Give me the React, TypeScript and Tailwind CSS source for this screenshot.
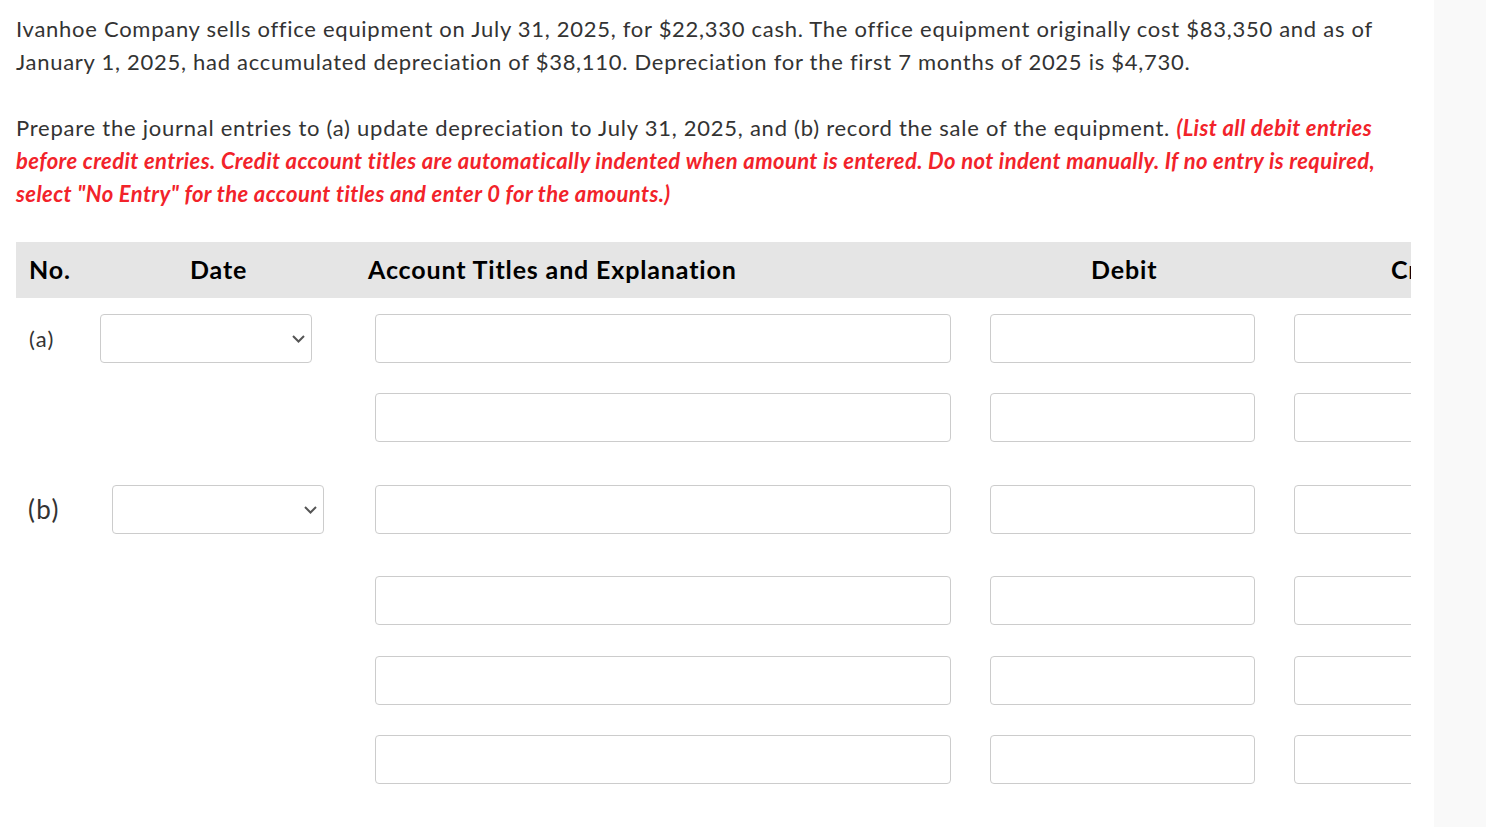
const box = "h-[49px] rounded-[4px] border border-[#cccccc] bg-white shrink-0";

function DateSelect() {
  return (
    <div className={`${box} w-[212px] flex items-center justify-end pr-[6px]`}>
      <svg width="13" height="8" viewBox="0 0 13 8" fill="none" className="mt-[1px]">
        <path d="M1 1l5.5 5.5L12 1" stroke="#555555" strokeWidth="2" />
      </svg>
    </div>
  );
}

function AmountCells() {
  return (
    <>
      <div className={`${box} w-[576px]`} />
      <div className={`${box} w-[265px] ml-[39px]`} />
      <div className={`${box} w-[265px] ml-[39px]`} />
    </>
  );
}

function EntryRow({ label, labelClass, selectLeft }: { label?: string; labelClass?: string; selectLeft?: number }) {
  return (
    <div className="flex items-center">
      <div className="w-[359px] shrink-0 flex items-center pl-[12px]">
        {label && (
          <>
            <span className={labelClass}>{label}</span>
            <div style={{ marginLeft: selectLeft }}>
              <DateSelect />
            </div>
          </>
        )}
      </div>
      <AmountCells />
    </div>
  );
}

export default function App() {
  return (
    <div className="flex min-h-[827px] bg-white font-['Lato',sans-serif] text-[#333333]">
      <div className="w-[1434px] shrink-0 pl-[16px] pr-[23px] pt-[12px]">
        <p className="text-[22px] leading-[33px] tracking-[0.72px]">
          Ivanhoe Company sells office equipment on July 31, 2025, for $22,330 cash. The office equipment originally cost $83,350 and as of January 1, 2025, had accumulated depreciation of $38,110. Depreciation for the first 7 months of 2025 is $4,730.
        </p>
        <p className="mt-[33px] text-[22px] leading-[33px] tracking-[0.75px]">
          Prepare the journal entries to (a) update depreciation to July 31, 2025, and (b) record the sale of the equipment.{" "}
          <span className="font-bold italic text-[#f2232a] tracking-[0.4px]">
            (List all debit entries before credit entries. Credit account titles are automatically indented when amount is entered. Do not indent manually. If no entry is required, select "No Entry" for the account titles and enter 0 for the amounts.)
          </span>
        </p>

        <div className="mt-[32px] w-[1395px] overflow-hidden">
          <div className="w-[1700px]">
            <div className="flex h-[56px] items-center bg-[#e5e5e5] text-[25px] font-bold tracking-[0.85px] text-black">
              <div className="w-[71px] shrink-0 pl-[13px]">No.</div>
              <div className="w-[288px] shrink-0 pl-[103px]">Date</div>
              <div className="w-[615px] shrink-0 -ml-[7px]">Account Titles and Explanation</div>
              <div className="w-[304px] shrink-0 pl-[108px]">Debit</div>
              <div className="w-[300px] shrink-0 pl-[104px]">Credit</div>
            </div>

            <div className="mt-[16px]">
              <EntryRow label="(a)" labelClass="text-[22px] tracking-[1.2px] w-[59px] pl-[1px]" selectLeft={13} />
            </div>
            <div className="mt-[30px]">
              <EntryRow />
            </div>
            <div className="mt-[43px]">
              <EntryRow label="(b)" labelClass="text-[26px] tracking-[1.4px] w-[72px]" selectLeft={12} />
            </div>
            <div className="mt-[42px]">
              <EntryRow />
            </div>
            <div className="mt-[31px]">
              <EntryRow />
            </div>
            <div className="mt-[30px]">
              <EntryRow />
            </div>
          </div>
        </div>
      </div>
      <div className="flex-1 bg-[#f9f9f9]" />
    </div>
  );
}
